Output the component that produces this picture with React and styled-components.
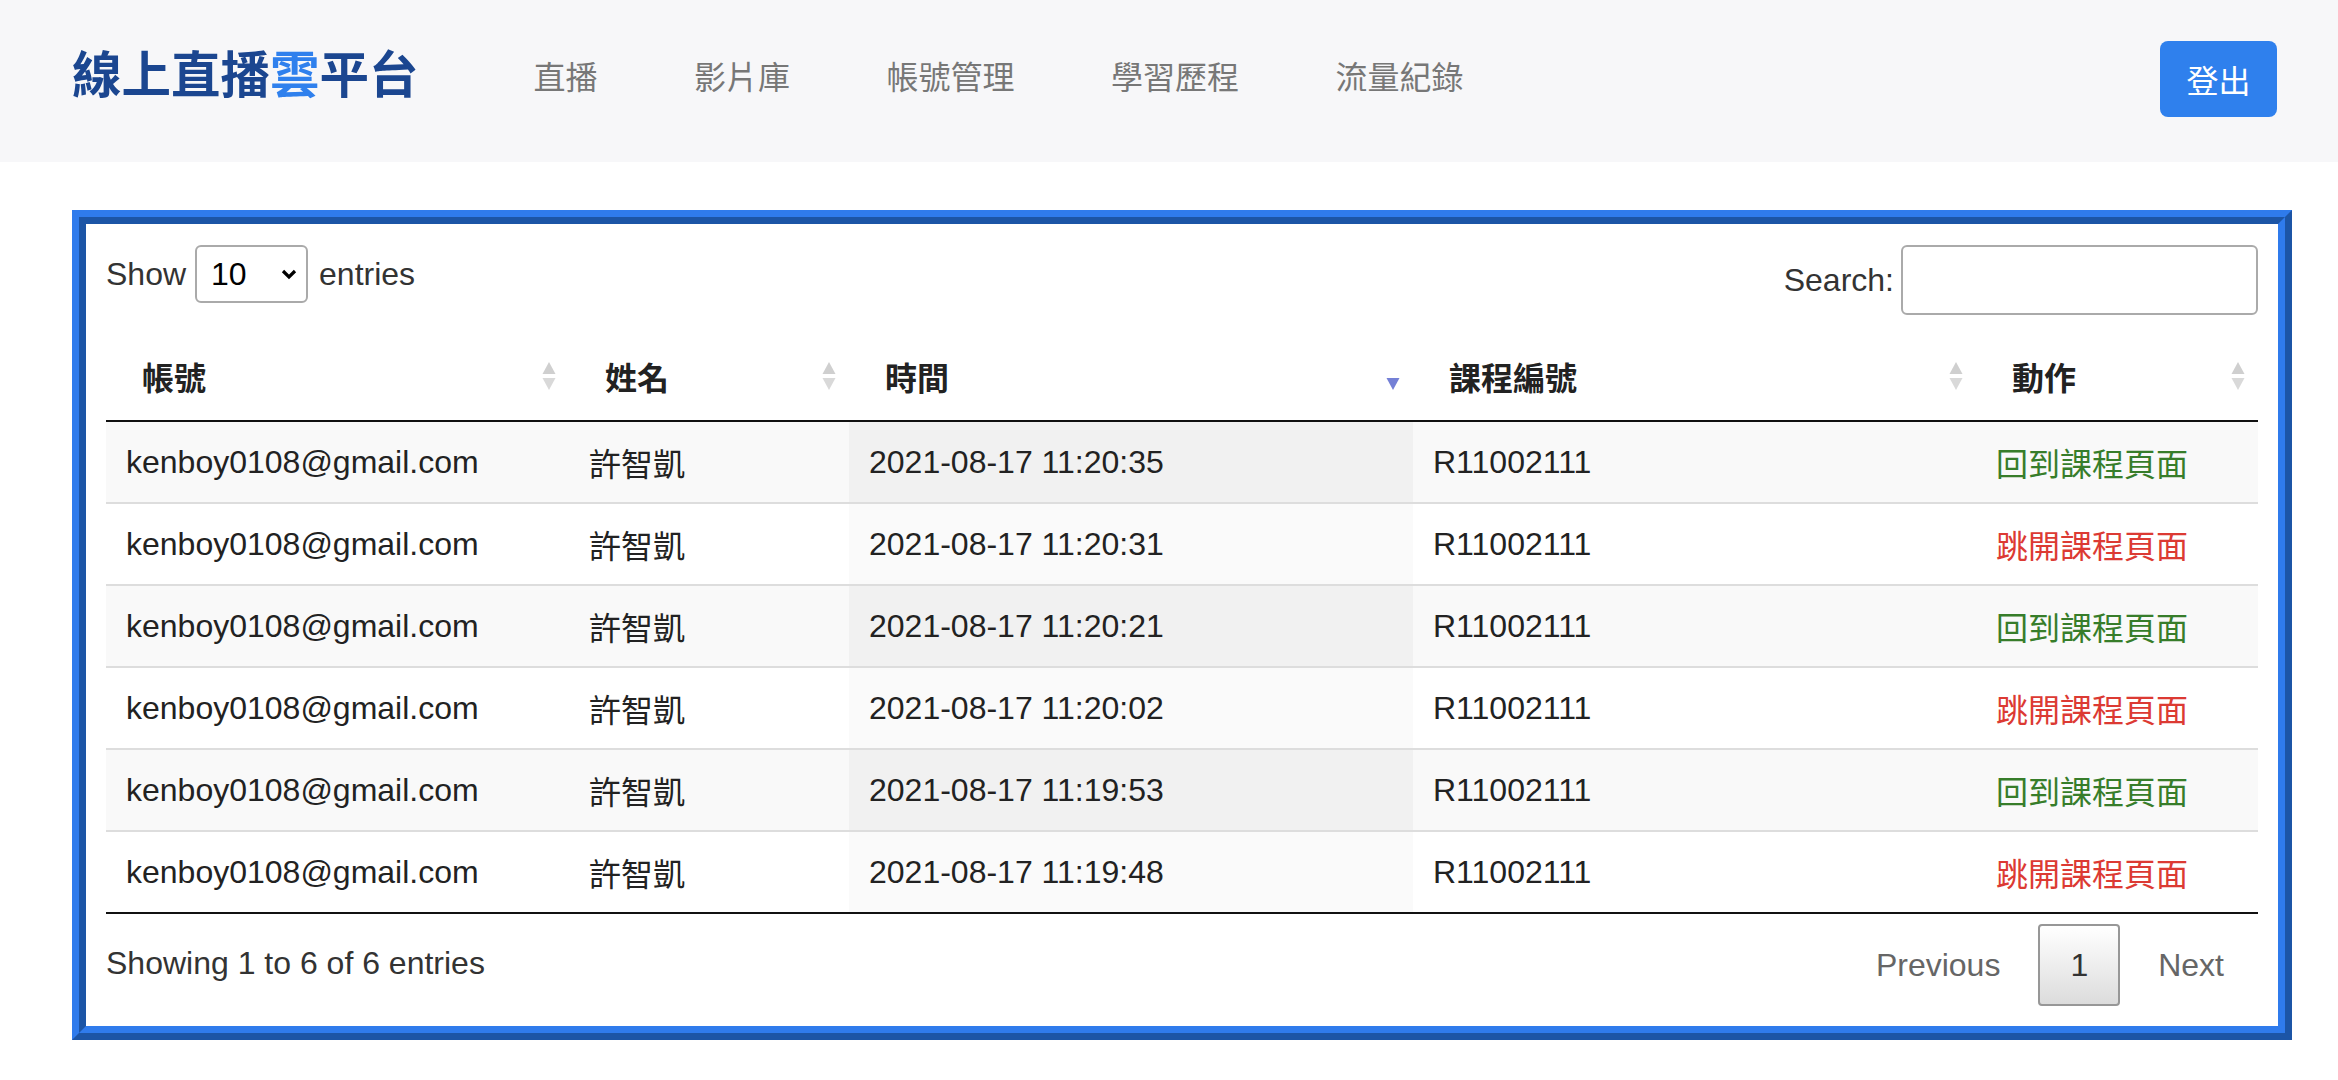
import React from "react";
import styled, { createGlobalStyle } from "styled-components";

const GlobalStyle = createGlobalStyle`
  * { box-sizing: border-box; }
  html, body { margin: 0; padding: 0; background: #ffffff; }
  body {
    font-family: "Liberation Sans", "Noto Sans CJK TC", Arial, sans-serif;
    font-size: 32px;
    line-height: 1.5;
    color: #222;
  }
`;

const CJK = `"Noto Sans CJK TC", "Liberation Sans", sans-serif`;
const LATIN = `"Liberation Sans", "Noto Sans CJK TC", sans-serif`;

const Page = styled.div`
  width: 2338px;
  min-height: 1080px;
`;

const NavBar = styled.header`
  height: 162px;
  background: #f7f7f9;
  display: flex;
  align-items: center;
  padding: 0 61px 4px 72px;
`;

const Brand = styled.div`
  font-family: ${CJK};
  font-size: 49.5px;
  font-weight: 700;
  color: #1b4690;
  line-height: 1;
  white-space: nowrap;
  margin-bottom: 14px;
`;

const BrandAccent = styled.span`
  color: #2f80ed;
`;

const NavList = styled.nav`
  display: flex;
  align-items: center;
  gap: 96.5px;
  margin-left: 115px;
  margin-bottom: 8px;
  flex: 1;
`;

const NavLink = styled.a`
  font-family: ${CJK};
  font-size: 32px;
  color: #777;
  text-decoration: none;
  line-height: 1;
  white-space: nowrap;
`;

const LogoutButton = styled.button`
  width: 117px;
  height: 76px;
  border: none;
  border-radius: 8px;
  background: #2f80ed;
  color: #fff;
  font-family: ${CJK};
  font-size: 32px;
  line-height: 1;
  padding: 0;
  cursor: pointer;
`;

const Main = styled.main`
  padding: 48px 0 40px 72px;
`;

const CardFrame = styled.section`
  width: 2220px;
  border: 7px solid;
  border-color: #2f7bec #1c55a6 #1c55a6 #2f7bec;
`;

const CardBody = styled.div`
  border: 7px solid;
  border-color: #1c55a6 #2f7bec #2f7bec #1c55a6;
  background: #fff;
  padding: 21px 20px 20px 20px;
`;

const Controls = styled.div`
  display: flex;
  justify-content: space-between;
  align-items: flex-start;
`;

const ControlLabel = styled.label`
  display: flex;
  align-items: center;
  color: #333;
  font-size: 32px;
  line-height: 1;
  white-space: nowrap;
`;

const SelectBox = styled.div`
  width: 113px;
  height: 58px;
  margin: 0 11px 0 9px;
  border: 2px solid #aaa;
  border-radius: 6px;
  display: flex;
  align-items: center;
  justify-content: space-between;
  padding: 0 9px 0 14px;
  color: #000;
  font-size: 32px;
  background: #fff;
`;

const SearchInput = styled.input`
  width: 357px;
  height: 70px;
  margin-left: 7px;
  border: 2px solid #aaa;
  border-radius: 6px;
  font-size: 32px;
  padding: 0 10px;
  background: #fff;
`;

const Table = styled.table`
  width: 2152px;
  table-layout: fixed;
  border-collapse: separate;
  border-spacing: 0;
  margin-top: 17px;
  border-bottom: 2px solid #111;
`;

const HeadCell = styled.th`
  font-family: ${CJK};
  font-weight: 700;
  font-size: 32px;
  line-height: 48px;
  height: 90px;
  color: #222;
  text-align: left;
  padding: 20px 13px 20px 36px;
  border-bottom: 2px solid #111;
`;

const HeadInner = styled.div`
  display: flex;
  align-items: center;
  justify-content: space-between;
  height: 48px;
`;

const Row = styled.tr`
  background: ${(p) => (p.$odd ? "#f9f9f9" : "#ffffff")};
`;

const Cell = styled.td`
  font-size: 32px;
  line-height: 48px;
  color: #222;
  padding: 0 20px;
  height: ${(p) => (p.$first ? "80px" : "82px")};
  border-top: ${(p) => (p.$first ? "none" : "2px solid #ddd")};
  background: ${(p) =>
    p.$sorted ? (p.$odd ? "#f1f1f1" : "#fafafa") : "transparent"};
  white-space: nowrap;
  overflow: hidden;
  vertical-align: middle;
  font-family: ${(p) => (p.$cjk ? CJK : LATIN)};
`;

const ActionText = styled.span`
  color: ${(p) => (p.$leave ? "#dc3a33" : "#377d2a")};
`;

const Footer = styled.div`
  display: flex;
  justify-content: space-between;
  align-items: flex-start;
`;

const Info = styled.div`
  padding-top: 25px;
  color: #333;
  font-size: 32px;
  line-height: 48px;
`;

const Paginate = styled.div`
  padding-top: 10px;
  display: flex;
  align-items: center;
`;

const PageButton = styled.span`
  display: inline-block;
  padding: 15px ${(p) => (p.$current ? "30px" : "32px")};
  margin-left: 4px;
  font-size: 32px;
  line-height: 48px;
  border-radius: 4px;
  border: 2px solid ${(p) => (p.$current ? "#979797" : "transparent")};
  color: ${(p) => (p.$current ? "#333" : "#666")};
  background: ${(p) =>
    p.$current ? "linear-gradient(to bottom, #ffffff 0%, #dcdcdc 100%)" : "transparent"};
`;

const Chevron = () => (
  <svg width="16" height="12" viewBox="0 0 16 12">
    <polyline points="2,3 8,9 14,3" fill="none" stroke="#000" strokeWidth="3.2" />
  </svg>
);

const SortIcon = ({ active }) => (
  <svg width="14" height="30" viewBox="0 0 14 30">
    {!active && <polygon points="0.5,13 7,1 13.5,13" fill="#cfcfcf" />}
    <polygon points="0.5,17 13.5,17 7,29" fill={active ? "#7480d6" : "#d9d9d9"} />
  </svg>
);

const columns = [
  { key: "account", label: "帳號", width: 463 },
  { key: "name", label: "姓名", width: 280 },
  { key: "time", label: "時間", width: 564, sorted: true },
  { key: "course", label: "課程編號", width: 563 },
  { key: "action", label: "動作", width: 282 },
];

const times = [
  "2021-08-17 11:20:35",
  "2021-08-17 11:20:31",
  "2021-08-17 11:20:21",
  "2021-08-17 11:20:02",
  "2021-08-17 11:19:53",
  "2021-08-17 11:19:48",
];

const rows = times.map((t, i) => ({
  account: "kenboy0108@gmail.com",
  name: "許智凱",
  time: t,
  course: "R11002111",
  leave: i % 2 === 1,
}));

export default function App() {
  return (
    <Page>
      <GlobalStyle />
      <NavBar>
        <Brand>
          線上直播<BrandAccent>雲</BrandAccent>平台
        </Brand>
        <NavList>
          {["直播", "影片庫", "帳號管理", "學習歷程", "流量紀錄"].map((n) => (
            <NavLink key={n} href="#">
              {n}
            </NavLink>
          ))}
        </NavList>
        <LogoutButton>登出</LogoutButton>
      </NavBar>
      <Main>
        <CardFrame>
          <CardBody>
            <Controls>
              <ControlLabel>
                Show
                <SelectBox>
                  <span>10</span>
                  <Chevron />
                </SelectBox>
                entries
              </ControlLabel>
              <ControlLabel>
                Search:
                <SearchInput type="search" />
              </ControlLabel>
            </Controls>
            <Table>
              <colgroup>
                {columns.map((c) => (
                  <col key={c.key} style={{ width: c.width }} />
                ))}
              </colgroup>
              <thead>
                <tr>
                  {columns.map((c) => (
                    <HeadCell key={c.key}>
                      <HeadInner>
                        <span>{c.label}</span>
                        <SortIcon active={c.sorted} />
                      </HeadInner>
                    </HeadCell>
                  ))}
                </tr>
              </thead>
              <tbody>
                {rows.map((r, i) => {
                  const odd = i % 2 === 0;
                  const first = i === 0;
                  return (
                    <Row key={i} $odd={odd}>
                      <Cell $first={first}>{r.account}</Cell>
                      <Cell $first={first} $cjk>{r.name}</Cell>
                      <Cell $first={first} $sorted $odd={odd}>{r.time}</Cell>
                      <Cell $first={first}>{r.course}</Cell>
                      <Cell $first={first} $cjk>
                        <ActionText $leave={r.leave}>
                          {r.leave ? "跳開課程頁面" : "回到課程頁面"}
                        </ActionText>
                      </Cell>
                    </Row>
                  );
                })}
              </tbody>
            </Table>
            <Footer>
              <Info>Showing 1 to 6 of 6 entries</Info>
              <Paginate>
                <PageButton>Previous</PageButton>
                <PageButton $current>1</PageButton>
                <PageButton>Next</PageButton>
              </Paginate>
            </Footer>
          </CardBody>
        </CardFrame>
      </Main>
    </Page>
  );
}
